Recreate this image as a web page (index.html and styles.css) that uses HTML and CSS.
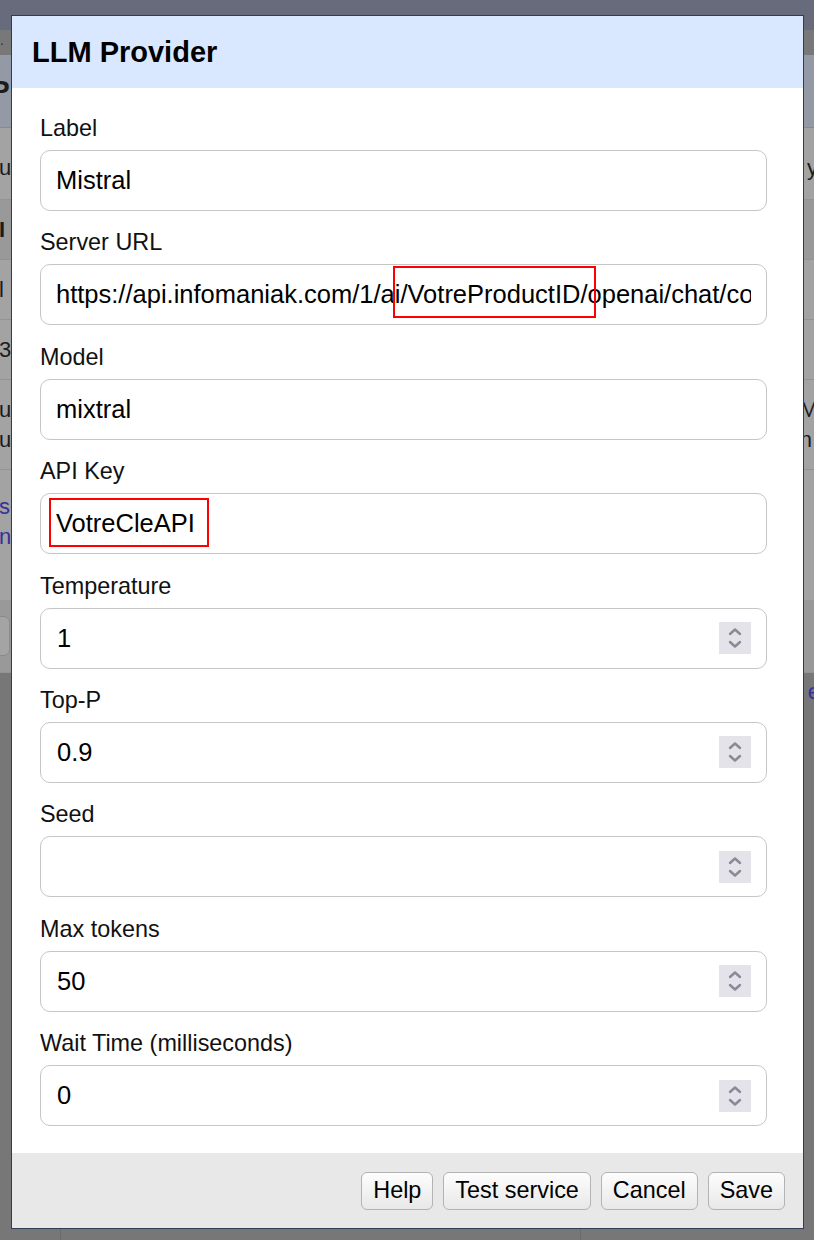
FILE: index.html
```html
<!DOCTYPE html>
<html lang="en">
<head>
<meta charset="utf-8">
<title>LLM Provider</title>
<link rel="stylesheet" href="styles.css">
</head>
<body>
<div class="page">
  <div class="topbar"></div>
  <div class="subbar"><span class="dot">.</span></div>
  <div class="thead"><span class="th">Pr</span></div>
  <div class="row r-a"><span class="lt">u</span><span class="rt">y</span></div>
  <div class="row r-b dark"><span class="lt bold">I</span><span class="rt"></span></div>
  <div class="row r-c"><span class="lt">l</span><span class="rt"></span></div>
  <div class="row r-d"><span class="lt">3.</span><span class="rt"></span></div>
  <div class="row r-e"><span class="lt two">u<br>up</span><span class="rt two">M<br>n</span></div>
  <div class="row r-f"><span class="lt two link">se<br>ng</span><span class="rt"></span></div>
  <div class="row r-g dark"><span class="ghost-btn"></span><span class="rt"></span></div>
  <div class="bottom">
    <span class="rt link lone">e</span>
    <span class="vline v1"></span>
    <span class="vline v2"></span>
  </div>
</div>

<div class="dialog">
  <div class="dlg-head"><h1 class="dlg-title">LLM Provider</h1></div>
  <div class="dlg-body">
    <div class="field">
      <div class="lbl">Label</div>
      <div class="input"><span class="val">Mistral</span></div>
    </div>
    <div class="field">
      <div class="lbl">Server URL</div>
      <div class="input"><span class="val">https://api.infomaniak.com/1/ai/VotreProductID/openai/chat/completions</span><span class="mark mark-url"></span></div>
    </div>
    <div class="field">
      <div class="lbl">Model</div>
      <div class="input"><span class="val">mixtral</span></div>
    </div>
    <div class="field">
      <div class="lbl">API Key</div>
      <div class="input"><span class="val">VotreCleAPI</span><span class="mark mark-key"></span></div>
    </div>
    <div class="field">
      <div class="lbl">Temperature</div>
      <div class="input num"><span class="val">1</span><span class="spin"><svg width="32" height="32" viewBox="0 0 32 32"><path d="M11 12 L16 7.5 L21 12" /><path d="M11 20 L16 24.5 L21 20" /></svg></span></div>
    </div>
    <div class="field">
      <div class="lbl">Top-P</div>
      <div class="input num"><span class="val">0.9</span><span class="spin"><svg width="32" height="32" viewBox="0 0 32 32"><path d="M11 12 L16 7.5 L21 12" /><path d="M11 20 L16 24.5 L21 20" /></svg></span></div>
    </div>
    <div class="field">
      <div class="lbl">Seed</div>
      <div class="input num"><span class="val"></span><span class="spin"><svg width="32" height="32" viewBox="0 0 32 32"><path d="M11 12 L16 7.5 L21 12" /><path d="M11 20 L16 24.5 L21 20" /></svg></span></div>
    </div>
    <div class="field">
      <div class="lbl">Max tokens</div>
      <div class="input num"><span class="val">50</span><span class="spin"><svg width="32" height="32" viewBox="0 0 32 32"><path d="M11 12 L16 7.5 L21 12" /><path d="M11 20 L16 24.5 L21 20" /></svg></span></div>
    </div>
    <div class="field">
      <div class="lbl">Wait Time (milliseconds)</div>
      <div class="input num"><span class="val">0</span><span class="spin"><svg width="32" height="32" viewBox="0 0 32 32"><path d="M11 12 L16 7.5 L21 12" /><path d="M11 20 L16 24.5 L21 20" /></svg></span></div>
    </div>
  </div>
  <div class="dlg-foot">
    <button class="btn">Help</button>
    <button class="btn">Test service</button>
    <button class="btn">Cancel</button>
    <button class="btn">Save</button>
  </div>
</div>
</body>
</html>
```

FILE: styles.css
```css
* { box-sizing: border-box; }

html, body {
  margin: 0;
  padding: 0;
}

body {
  width: 814px;
  height: 1240px;
  overflow: hidden;
  background: #777777;
  font-family: "Liberation Sans", Arial, Helvetica, sans-serif;
  position: relative;
}

/* ---------- dimmed page behind the dialog ---------- */
.page {
  display: flex;
  flex-direction: column;
  height: 1240px;
  color: #1c1c1c;
  font-size: 22px;
}

.topbar {
  height: 30px;
  background: #676b7b;
}

.subbar {
  height: 25px;
  background: #787878;
  position: relative;
}

.dot {
  position: absolute;
  left: 0;
  top: 2px;
  font-size: 14px;
  color: #333;
}

.thead {
  height: 73px;
  background: #939aa5;
  border-bottom: 1px solid #858a93;
  display: flex;
  align-items: center;
}

.th {
  font-weight: bold;
  font-size: 28px;
  margin-left: -9px;
  color: #1b1b1b;
}

.row {
  display: flex;
  justify-content: space-between;
  align-items: center;
  background: #a3a3a3;
  border-bottom: 1px solid #939393;
}

.row.dark { background: #999999; }

.lt { margin-left: -1px; }
.rt { margin-right: -4px; }
.bold { font-weight: bold; }
.two { line-height: 30px; }
.link { color: #33339a; }

.r-a { height: 72px; padding-top: 8px; }
.r-b { height: 60px; }
.r-c { height: 60px; }
.r-d { height: 60px; }
.r-e { height: 90px; }
.r-f { height: 130px; border-bottom: none; align-items: flex-start; padding-top: 22px; }
.r-g { height: 73px; }

.ghost-btn {
  width: 30px;
  height: 40px;
  margin-left: -20px;
  border: 1px solid #8a8a8a;
  border-radius: 6px;
  background: #a4a4a4;
}

.bottom {
  flex: 1;
  background: #777777;
  position: relative;
}

.lone {
  position: absolute;
  right: -2px;
  top: 6px;
}

.vline {
  position: absolute;
  top: 555px;
  width: 1px;
  height: 20px;
  background: #6a6a6a;
}
.v1 { left: 60px; }
.v2 { left: 580px; }

/* ---------- dialog ---------- */
.dialog {
  position: absolute;
  left: 11px;
  top: 15px;
  width: 793px;
  border: 1px solid #2f3d55;
  background: #ffffff;
  display: flex;
  flex-direction: column;
}

.dlg-head {
  height: 72px;
  background: #d9e7ff;
  display: flex;
  align-items: center;
  padding-left: 20px;
}

.dlg-title {
  margin: 0;
  font-size: 29px;
  font-weight: bold;
  color: #000;
  line-height: 1;
}

.dlg-body {
  padding: 26px 36px 27px 28px;
  display: flex;
  flex-direction: column;
  gap: 17.4px;
}

.field {
  display: flex;
  flex-direction: column;
  gap: 8px;
}

.lbl {
  font-size: 23.4px;
  line-height: 28px;
  height: 28px;
  color: #111;
}

.input {
  position: relative;
  height: 61px;
  border: 1px solid #c6c6c6;
  border-radius: 10px;
  display: flex;
  align-items: center;
  padding: 0 15px 0 15px;
  overflow: hidden;
}

.val {
  font-size: 25.5px;
  color: #000;
  white-space: nowrap;
  flex: 1;
  overflow: hidden;
}

.num .val { padding-left: 1px; }

.spin {
  width: 32px;
  height: 32px;
  background: #e4e3ea;
  flex: none;
  display: block;
}

.spin svg {
  display: block;
  fill: none;
  stroke: #8a8998;
  stroke-width: 2.4;
  stroke-linecap: round;
  stroke-linejoin: round;
}

.mark {
  position: absolute;
  border: 2.5px solid #ff0000;
}

.mark-url {
  left: 352px;
  top: 1px;
  width: 203px;
  height: 52px;
}

.mark-key {
  left: 8px;
  top: 4px;
  width: 160px;
  height: 49px;
}

.dlg-foot {
  height: 75px;
  background: #e8e8e8;
  display: flex;
  justify-content: flex-end;
  align-items: flex-start;
  gap: 10px;
  padding: 19px 18px 0 0;
}

.btn {
  height: 38px;
  padding: 0 11px;
  font-family: "Liberation Sans", Arial, Helvetica, sans-serif;
  font-size: 23.4px;
  color: #000;
  background: linear-gradient(#fdfdfd, #e8e8e8);
  border: 1px solid #b3b3b3;
  border-radius: 6px;
  line-height: 1;
}
```
